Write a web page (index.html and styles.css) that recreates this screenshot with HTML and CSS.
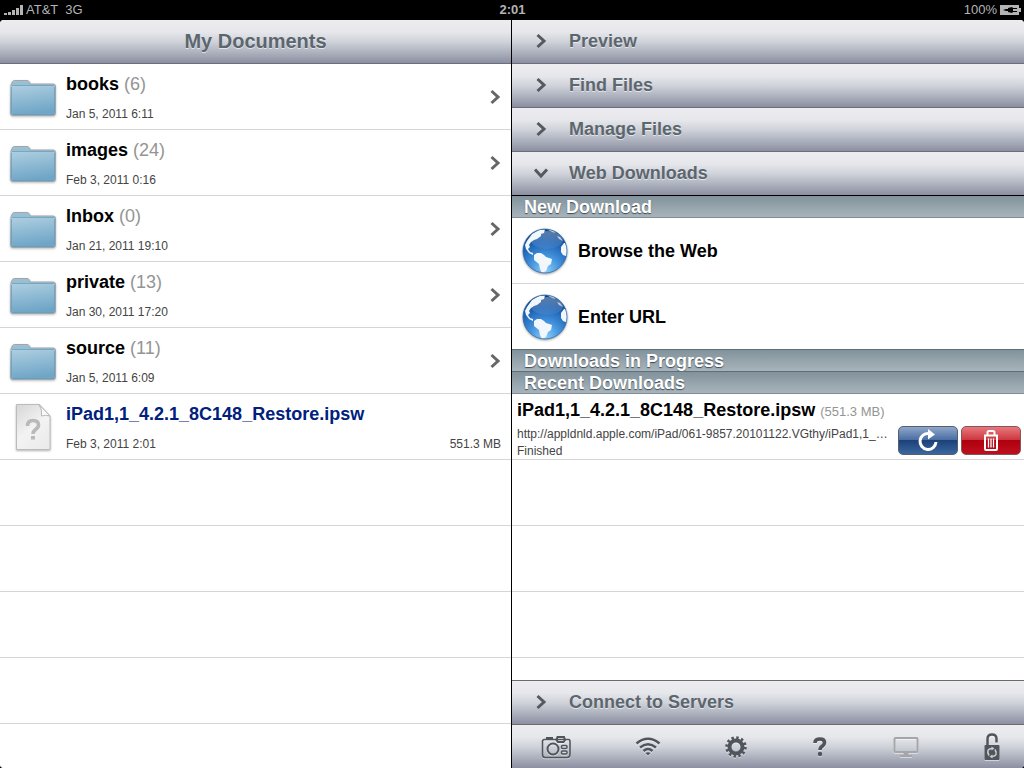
FILE: index.html
```html
<!DOCTYPE html>
<html lang="en">
<head>
<meta charset="utf-8">
<meta name="viewport" content="width=device-width, initial-scale=1">
<title>My Documents</title>
<link rel="stylesheet" href="styles.css">
</head>
<body>
<svg class="defs" aria-hidden="true">
  <defs>
    <linearGradient id="folder-front" x1="0" y1="0" x2="0.2" y2="1"><stop offset="0" stop-color="#b0cfe1"/><stop offset="1" stop-color="#6fa6c7"/></linearGradient>
    <linearGradient id="folder-back" x1="0" y1="0" x2="0" y2="1"><stop offset="0" stop-color="#9dc0d4"/><stop offset="1" stop-color="#78a9c5"/></linearGradient>
    <linearGradient id="paper" x1="0" y1="0" x2="0.6" y2="1"><stop offset="0" stop-color="#d6d6d6"/><stop offset="0.6" stop-color="#f3f3f3"/><stop offset="1" stop-color="#ececec"/></linearGradient>
    <radialGradient id="ocean" cx="0.5" cy="0.95" r="0.95"><stop offset="0" stop-color="#8fd0fb"/><stop offset="0.35" stop-color="#4595df"/><stop offset="0.7" stop-color="#1d62b4"/><stop offset="1" stop-color="#123e7c"/></radialGradient>
    <linearGradient id="gloss" x1="0" y1="0" x2="0" y2="1"><stop offset="0" stop-color="#fff" stop-opacity="0.3"/><stop offset="1" stop-color="#fff" stop-opacity="0.05"/></linearGradient>
    <clipPath id="globe-clip"><circle cx="24" cy="24" r="22"/></clipPath>
    <symbol id="folder" viewBox="0 0 48 38">
      <path d="M2 6 3.500 2.500Q4 1.500 5.500 1.500H18Q19.500 1.500 20 2.500L21.500 5H44Q46.500 5 46.500 7V34Q46.500 36.500 44 36.500H4Q1.500 36.500 1.500 34Z" fill="url(#folder-back)" stroke="#a5a5a5"/>
      <path d="M2 9Q2 6 4 6H44Q46 6 46 9V34Q46 36 44 36H4Q2 36 2 34Z" fill="url(#folder-front)"/>
      <path d="M3 6.500H45" stroke="#63a2c6" opacity=".8"/><path d="M2.500 8V33M45.500 8V33M4 35.500H44" stroke="#5c9fc6" opacity=".7"/>
    </symbol>
    <symbol id="chevron" viewBox="0 0 12 16"><path d="M2.500 2 9 8 2.500 14" fill="none" stroke="currentColor" stroke-width="3"/></symbol>
    <symbol id="globe" viewBox="0 0 48 48">
      <circle cx="24" cy="24" r="22" fill="url(#ocean)"/>
      <ellipse cx="26" cy="13" rx="16" ry="9" fill="url(#gloss)"/>
      <g clip-path="url(#globe-clip)" fill="#f1f7fc">
        <path d="M6 14 11 7 18 3 24 2.500 23 6 20 7 20 9 16 12 13 13 10 15 8 18 9 20 7 22 9 25 12 26 12 28 8 26 5 22 4 18Z"/>
        <path d="M26 2.500 32 3 35 6 31 5Z" opacity=".7"/>
        <path d="M13 28 16 26 20 26 23 28 25 30 31 32 30 37 27 39 25 44 21 46 19 42 18 37 13 33Z"/>
        <path d="M40 20 43 16 44 16 47 20V30L42 28 40 25Z"/>
        <path d="M36 9 39 10 42 14 38 12Z" opacity=".7"/>
      </g>
      <circle cx="24" cy="24" r="22" fill="none" stroke="#2866aa" stroke-width=".7"/>
    </symbol>
  </defs>
</svg>
<header class="status">
  <div class="status-side">
    <svg class="signal" viewBox="0 0 19 10" aria-label="Signal"><path d="M0 8h3v2H0zM4 7h3v3H4zM8 5h3v5H8zM12 3h3v7h-3zM16 0h3v10h-3z" fill="currentColor"/></svg>
    <span class="carrier">AT&amp;T</span><span>3G</span>
  </div>
  <time>2:01</time>
  <div class="status-side status-end">
    <span>100%</span>
    <svg class="battery" viewBox="0 0 21 10" aria-label="Charging"><path d="M0 0h19v3h2v4h-2v3H0z" fill="currentColor"/><path d="M3 5 6 4 8 4 8 3 12 2 13 3H17V4H13V6H17V7H13L12 8 8 7V6H6Z" fill="#000"/></svg>
  </div>
</header>
<main class="split">
  <section class="pane documents">
    <h1 class="bar title">My Documents</h1>
    <ul class="list">
      <li><a class="row" href="#books"><svg class="folder"><use href="#folder"/></svg><span class="info"><span class="name">books <span class="count">(6)</span></span><span class="date">Jan 5, 2011 6:11</span></span><svg class="chevron"><use href="#chevron"/></svg></a></li>
      <li><a class="row" href="#images"><svg class="folder"><use href="#folder"/></svg><span class="info"><span class="name">images <span class="count">(24)</span></span><span class="date">Feb 3, 2011 0:16</span></span><svg class="chevron"><use href="#chevron"/></svg></a></li>
      <li><a class="row" href="#inbox"><svg class="folder"><use href="#folder"/></svg><span class="info"><span class="name">Inbox <span class="count">(0)</span></span><span class="date">Jan 21, 2011 19:10</span></span><svg class="chevron"><use href="#chevron"/></svg></a></li>
      <li><a class="row" href="#private"><svg class="folder"><use href="#folder"/></svg><span class="info"><span class="name">private <span class="count">(13)</span></span><span class="date">Jan 30, 2011 17:20</span></span><svg class="chevron"><use href="#chevron"/></svg></a></li>
      <li><a class="row" href="#source"><svg class="folder"><use href="#folder"/></svg><span class="info"><span class="name">source <span class="count">(11)</span></span><span class="date">Jan 5, 2011 6:09</span></span><svg class="chevron"><use href="#chevron"/></svg></a></li>
      <li><a class="row" href="#restore">
        <svg class="file" viewBox="0 0 48 50"><path d="M7.500 2.500H30L41 14V47.500H7.500Z" fill="url(#paper)" stroke="#bcbcbc"/><path d="M30 2.500 41 14Q36.500 12.500 32.500 14 33.500 7.500 30 2.500Z" fill="#fafafa" stroke="#aaa" stroke-width=".8"/><path d="M18.500 24Q18.500 18.500 24 18.500 29.500 18.500 29.500 23 29.500 25.500 26.500 27.500 24 29.500 24 32" fill="none" stroke="#b9b9b9" stroke-width="3.600"/><path d="M22 34h4v3.500h-4z" fill="#b9b9b9"/></svg>
        <span class="info"><span class="name file-name">iPad1,1_4.2.1_8C148_Restore.ipsw</span><span class="date meta"><span>Feb 3, 2011 2:01</span><span>551.3 MB</span></span></span></a></li>
    </ul>
    <div class="blank"></div>
  </section>
  <section class="pane tools">
    <button class="bar fold"><svg class="arrow"><use href="#chevron"/></svg>Preview</button>
    <button class="bar fold"><svg class="arrow"><use href="#chevron"/></svg>Find Files</button>
    <button class="bar fold"><svg class="arrow"><use href="#chevron"/></svg>Manage Files</button>
    <button class="bar fold open" aria-expanded="true"><svg class="arrow"><use href="#chevron"/></svg>Web Downloads</button>
    <h2 class="section">New Download</h2>
    <a class="row web" href="#browse"><svg class="globe"><use href="#globe"/></svg><span class="name">Browse the Web</span></a>
    <a class="row web last" href="#url"><svg class="globe"><use href="#globe"/></svg><span class="name">Enter URL</span></a>
    <h2 class="section ruled">Downloads in Progress</h2>
    <h2 class="section ruled closing">Recent Downloads</h2>
    <article class="row download">
      <div class="name">iPad1,1_4.2.1_8C148_Restore.ipsw <span class="size">(551.3 MB)</span></div>
      <div class="download-body">
        <div class="download-text"><div>http://appldnld.apple.com/iPad/061-9857.20101122.VGthy/iPad1,1_…</div><div>Finished</div></div>
        <button class="action retry" aria-label="Download again"><svg viewBox="0 0 24 24"><path d="M13 4.500A8 8 0 1 0 20 13" fill="none" stroke="#fff" stroke-width="3"/><path d="M12 0 19 5.500 12 10.500Z" fill="#fff"/></svg></button>
        <button class="action delete" aria-label="Delete"><svg viewBox="0 0 24 24"><g fill="none" stroke="#fff" stroke-width="2"><path d="M8.500 6V3.500Q8.500 2 10 2H14Q15.500 2 15.500 3.500V6M5 6.500H19M6 7V20Q6 21 7 21H17Q18 21 18 20V7"/><path d="M9.500 9.500V18.500M12 9.500V18.500M14.500 9.500V18.500" stroke-width="1.300"/></g></svg></button>
      </div>
    </article>
    <div class="blank"></div>
    <button class="bar fold ruled-bar"><svg class="arrow"><use href="#chevron"/></svg>Connect to Servers</button>
    <nav class="bar toolbar ruled-bar" aria-label="Tools">
      <button aria-label="Camera"><svg width="32" height="26" viewBox="0 0 32 26"><g fill="none" stroke="currentColor"><path d="M4.500 5.500H28.500Q30 5.500 30 7.500V20Q30 23.500 27 23.500H5Q2.500 23.500 2.500 20V7.500Q2.500 5.500 4.500 5.500Z" stroke-width="1.600"/><circle cx="13" cy="15" r="5.500" stroke-width="2"/><rect x="21.500" y="11.500" width="5.500" height="3" rx="1" stroke-width="1.500"/><rect x="21.500" y="17" width="5.500" height="3" rx="1" stroke-width="1.500"/><path d="M16.500 6 17.500 3H24L25 6 23.500 8H18Z" stroke-width="2"/><path d="M7 5V4H12V5" stroke-width="2"/></g></svg></button>
      <button aria-label="Wi-Fi"><svg width="26" height="24" viewBox="0 0 26 24"><g fill="none" stroke="currentColor" stroke-width="2.400"><path d="M1.500 8.500Q13 -1 24.500 8.500M5 12.500Q13 6 21 12.500M8.500 16Q13 12 17.500 16"/></g><path d="M10.500 18Q13 16.500 15.500 18L13 20.500Z" fill="currentColor"/></svg></button>
      <button aria-label="Settings"><svg width="24" height="24" viewBox="0 0 24 24"><circle cx="12" cy="12" r="6.500" fill="none" stroke="currentColor" stroke-width="4"/><circle cx="12" cy="12" r="9.250" fill="none" stroke="currentColor" stroke-width="3" stroke-dasharray="2.420 2.420"/></svg></button>
      <button aria-label="Help"><svg width="18" height="24" viewBox="0 0 18 24"><path d="M4 8Q4 4 9 4 13.500 4 13.500 7.500 13.500 9.500 11.500 11 9 12.500 9 15" fill="none" stroke="currentColor" stroke-width="3.600"/><circle cx="9" cy="19" r="2.200" fill="currentColor"/></svg></button>
      <button aria-label="Screen" disabled><svg width="28" height="26" viewBox="0 0 28 26"><rect x="2.500" y="4" width="23" height="14" rx="1" fill="none" stroke="currentColor" stroke-width="2"/><path d="M11.500 19h5v2h3.500v2H8v-2h3.500z" fill="currentColor"/></svg></button>
      <button aria-label="Unlock"><svg width="18" height="28" viewBox="0 0 18 28"><path d="M4.500 13V6Q4.500 1.500 9 1.500T13.500 6V9.500" fill="none" stroke="currentColor" stroke-width="2.500"/><rect x="1.500" y="12" width="15" height="15" rx="1" fill="currentColor"/><g fill="none" stroke="#c9ccd2" stroke-width="1.600"><path d="M6 22.500Q2.500 16 9 15.500M12 16.500Q15.500 23 9 23.500"/></g><path d="M8.500 13.500 11.500 15.500 8.500 17.500ZM9.500 21.500 6.500 23.500 9.500 25.500Z" fill="#c9ccd2"/></svg></button>
    </nav>
  </section>
</main>
</body>
</html>
```
FILE: styles.css
```css
* { box-sizing: border-box; }
body {
  margin: 0;
  min-height: 100vh;
  display: flex;
  flex-direction: column;
  background: #000;
  color: #000;
  font-family: "Liberation Sans", Arial, sans-serif;
}
.defs { position: absolute; width: 0; height: 0; }
h1, h2, ul { margin: 0; padding: 0; list-style: none; }
button { border: 0; padding: 0; background: none; font: inherit; color: inherit; }
a { color: inherit; text-decoration: none; }
svg { flex: none; display: block; }

.status {
  display: grid;
  grid-template-columns: 1fr auto 1fr;
  align-items: center;
  height: 20px;
  padding: 0 3px 0 4px;
  color: #b4b4b4;
  font-size: 13px;
  line-height: 20px;
}
.status time { font-weight: bold; font-size: 13px; }
.status-side { display: flex; align-items: center; gap: 3px; }
.status-end { justify-content: flex-end; }
.carrier { margin-right: 4px; }
.signal { width: 19px; height: 10px; }
.battery { width: 21px; height: 10px; }

.split {
  flex: 1;
  display: grid;
  grid-template-columns: 1fr 1fr;
  border-radius: 4px;
  overflow: hidden;
}
.pane { display: flex; flex-direction: column; min-width: 0; background: #fff; }
.documents { border-right: 1px solid #000; }
.bar {
  flex: none;
  height: 44px;
  border-bottom: 1px solid #6b6e7b;
  background: linear-gradient(#ededf0, #e6e7eb 28%, #d0d3da 50%, #a9aebb 78%, #8c8fa1);
  color: #5c666e;
  font-size: 18px;
  font-weight: bold;
  line-height: 42px;
  text-shadow: 0 1px 0 rgba(255, 255, 255, .6);
}
.title { font-size: 20px; text-align: center; }
.fold { display: flex; align-items: center; gap: 22px; padding: 0 0 2px 23px; text-align: left; }
.arrow { width: 12px; height: 16px; color: #555a60; }
.open .arrow { transform: rotate(90deg); }
.open { border-bottom-color: #000; }
.ruled-bar { border-top: 1px solid #6b6b70; border-bottom: 0; }

.row {
  display: flex;
  align-items: center;
  height: 66px;
  border-bottom: 1px solid #d5d5d5;
}
.name { font-size: 18px; font-weight: bold; line-height: 22px; }
.list .row { padding: 0 10px 0 9px; }
.folder { width: 48px; height: 38px; margin-top: 2px; filter: drop-shadow(0 1px 1px rgba(0, 0, 0, .25)); }
.file { width: 48px; height: 50px; filter: drop-shadow(0 1px 1px rgba(0, 0, 0, .3)); }
.info { flex: 1; display: flex; flex-direction: column; gap: 11px; padding: 1px 0 0 9px; }
.count { color: #949494; font-weight: normal; }
.date { color: #444; font-size: 12px; line-height: 16px; }
.meta { display: flex; justify-content: space-between; }
.file-name { color: #00207e; }
.chevron { width: 12px; height: 16px; color: #666; }
.blank {
  flex: 1;
  background: repeating-linear-gradient(#fff 0 65px, #d5d5d5 65px 66px);
}

.section {
  flex: none;
  height: 22px;
  padding-left: 12px;
  border-bottom: 1px solid #7f8d95;
  background: linear-gradient(#82929b, #a8b4bb);
  color: #fff;
  font-size: 18px;
  line-height: 22px;
  text-shadow: 0 1px 1px rgba(40, 50, 60, .8);
}
.ruled { border-top: 1px solid #5f6f79; border-bottom: 0; }
.closing { height: 23px; border-bottom: 1px solid #7f8d95; }
.web { gap: 9px; padding-left: 9px; }
.last { height: 65px; border-bottom: 0; }
.globe { width: 48px; height: 48px; filter: drop-shadow(0 1px 1px rgba(0, 0, 0, .4)); }

.download { display: block; padding: 5px 3px 0 5px; }
.size { color: #949494; font-size: 13px; font-weight: normal; }
.download-body { display: flex; gap: 3px; align-items: flex-start; padding-top: 3px; }
.download-text { flex: 1; min-width: 0; color: #444; font-size: 12px; line-height: 17px; white-space: nowrap; }
.action {
  width: 60px;
  height: 29px;
  display: grid;
  place-items: center;
  flex: none;
  border: 1px solid #56606b;
  border-radius: 5px;
}
.action svg { width: 24px; height: 24px; }
.retry { background: linear-gradient(#8ea7ca, #476b9f 50%, #1d4179 50%, #3b669f); }
.delete { background: linear-gradient(#e7787c, #cb343c 50%, #b00010 50%, #bd101d); border-color: #84555a; }

.toolbar { display: flex; align-items: center; justify-content: space-between; padding: 0 23px 0 28px; color: #50555b; }
.toolbar button { filter: drop-shadow(0 1px 0 rgba(255, 255, 255, .5)); }
.toolbar button:disabled { color: #a4a6aa; }
```
